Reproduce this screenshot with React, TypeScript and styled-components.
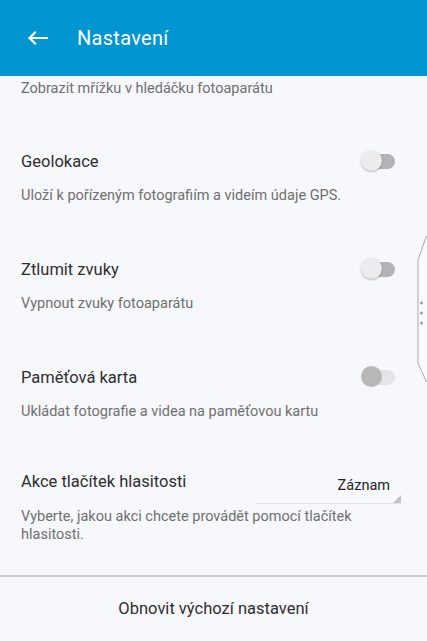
import { type FC } from 'react'
import styled, { createGlobalStyle, css } from 'styled-components'

const GlobalStyle = createGlobalStyle`
  html, body {
    margin: 0;
    padding: 0;
    height: 100%;
    overflow: hidden;
    background: #f7f8fc;
  }

  #root {
    height: 100%;
  }
`

const Screen = styled.div`
  display: flex;
  flex-direction: column;
  font-family: Roboto, 'Noto Sans', sans-serif;
  height: 100vh;
  position: relative;
`

const AppBar = styled.header`
  align-items: center;
  background: #0195d1;
  box-sizing: border-box;
  color: #fff;
  display: flex;
  flex-shrink: 0;
  height: 76px;
  padding: 0 0 0 28px;
`

const BackButton = styled.button`
  background: none;
  border: 0;
  display: flex;
  margin: 0 29px 0 0;
  padding: 0;
`

const Title = styled.h1`
  font-size: 20px;
  font-weight: 400;
  letter-spacing: 0.3px;
  margin: 0 0 1px;
`

const List = styled.div`
  display: flex;
  flex: 1;
  flex-direction: column;
`

const Item = styled.div<{ $top?: number; $bottom?: number }>`
  display: flex;
  flex-direction: column;
  padding: ${({ $top = 14 }) => $top}px 26px ${({ $bottom = 38 }) => $bottom}px 21px;
`

const Row = styled.div`
  align-items: center;
  display: flex;
  height: 24px;
  justify-content: space-between;
`

const Label = styled.span`
  color: #2e2e2e;
  font-size: 16.5px;
`

const Description = styled.p<{ $gap?: number }>`
  color: #6f6f6f;
  font-size: 14.5px;
  line-height: 18px;
  margin: ${({ $gap = 14 }) => $gap}px 0 0;
`

const Switch = styled.span<{ $disabled?: boolean }>`
  display: block;
  height: 22px;
  margin-right: 6px;
  position: relative;
  width: 34px;

  &::before {
    background: ${({ $disabled }) => ($disabled ? '#e4e4e6' : '#b3b3b5')};
    border-radius: 8px;
    content: '';
    height: 15px;
    left: 3px;
    position: absolute;
    right: 0;
    top: 4px;
  }

  &::after {
    border-radius: 50%;
    content: '';
    height: 21px;
    left: 0;
    position: absolute;
    top: 0;
    width: 21px;

    ${({ $disabled }) =>
      $disabled
        ? css`
            background: #b7b7b9;
          `
        : css`
            background: #ececee;
            box-shadow: 0 1px 2px rgba(0, 0, 0, 0.28);
          `}
  }
`

const Select = styled.div`
  border-bottom: 1px solid #e3e4e8;
  box-sizing: border-box;
  color: #1f1f1f;
  font-size: 14.5px;
  height: 35px;
  margin-bottom: -11px;
  padding: 8px 11px 0 0;
  position: relative;
  text-align: right;
  width: 145px;

  &::after {
    border-bottom: 8px solid #c3c3c6;
    border-left: 8px solid transparent;
    bottom: 0;
    content: '';
    position: absolute;
    right: 0;
  }
`

const Footer = styled.button`
  background: #f7f8fc;
  border: 0;
  border-top: 2px solid #cfcfd2;
  color: #2e2e2e;
  flex-shrink: 0;
  font-family: inherit;
  font-size: 16.5px;
  height: 66px;
  padding: 0 0 1px;
  width: 100%;
`

const EdgeHandle = styled.svg`
  position: absolute;
  right: 0;
  top: 236px;
`

const BackIcon: FC = () => (
  <svg width="20" height="16" viewBox="0 0 20 16" fill="none">
    <path d="M1.5 8H19M7 2.5L1.5 8L7 13.5" stroke="#fff" strokeWidth="2.2" strokeLinecap="square" />
  </svg>
)

type ToggleSetting = {
  label: string
  description: string
  disabled?: boolean
}

const toggles: ToggleSetting[] = [
  { label: 'Geolokace', description: 'Uloží k pořízeným fotografiím a videím údaje GPS.' },
  { label: 'Ztlumit zvuky', description: 'Vypnout zvuky fotoaparátu' },
  { label: 'Paměťová karta', description: 'Ukládat fotografie a videa na paměťovou kartu', disabled: true },
]

const App: FC = () => (
  <>
    <GlobalStyle />
    <Screen>
      <AppBar>
        <BackButton aria-label="Zpět">
          <BackIcon />
        </BackButton>
        <Title>Nastavení</Title>
      </AppBar>
      <List>
        <Item $top={4} $bottom={37}>
          <Description $gap={0}>Zobrazit mřížku v hledáčku fotoaparátu</Description>
        </Item>
        {toggles.map((t) => (
          <Item key={t.label}>
            <Row>
              <Label>{t.label}</Label>
              <Switch $disabled={t.disabled} />
            </Row>
            <Description>{t.description}</Description>
          </Item>
        ))}
        <Item $top={10} $bottom={0}>
          <Row>
            <Label>Akce tlačítek hlasitosti</Label>
            <Select>Záznam</Select>
          </Row>
          <Description $gap={15}>Vyberte, jakou akci chcete provádět pomocí tlačítek hlasitosti.</Description>
        </Item>
      </List>
      <Footer>Obnovit výchozí nastavení</Footer>
      <EdgeHandle width="10" height="146" viewBox="0 0 10 146">
        <path d="M9.5 0L1 24V127L9.5 146" stroke="#a9a9ad" strokeWidth="1" fill="#f9fafd" />
        <circle cx="4.5" cy="67" r="1.6" fill="#a3a3a7" />
        <circle cx="4.5" cy="77" r="1.6" fill="#a3a3a7" />
        <circle cx="4.5" cy="87" r="1.6" fill="#a3a3a7" />
      </EdgeHandle>
    </Screen>
  </>
)

export default App
